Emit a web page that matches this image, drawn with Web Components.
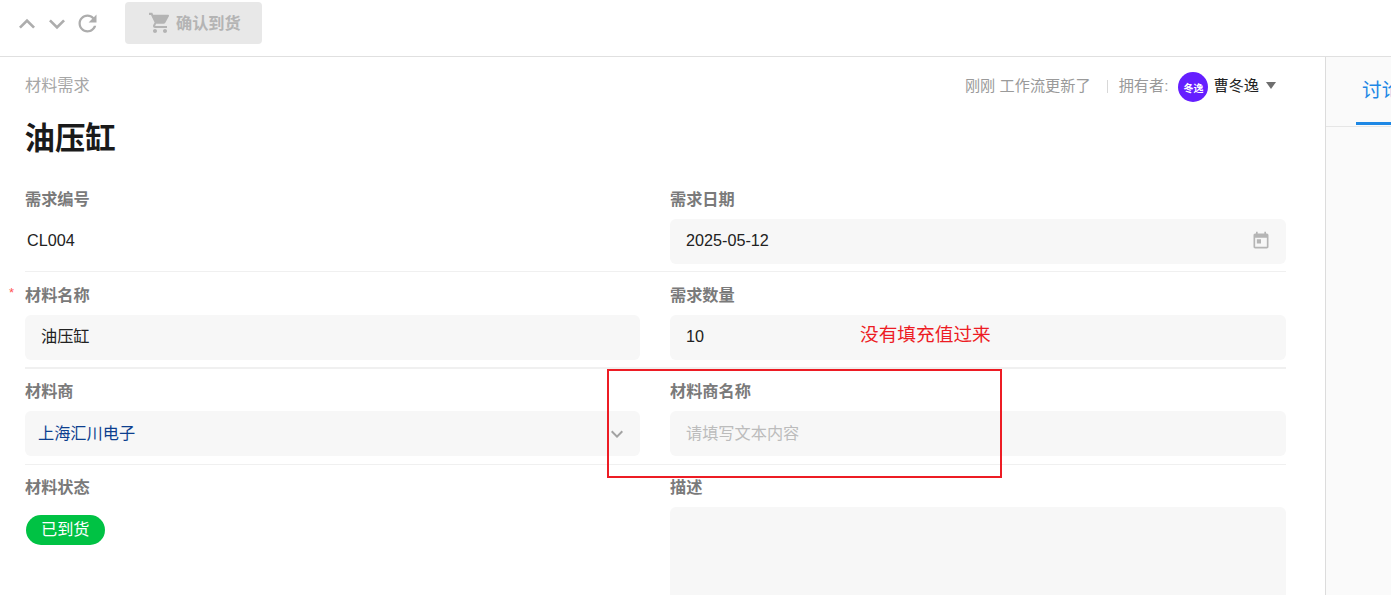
<!DOCTYPE html>
<html lang="zh">
<head>
<meta charset="utf-8">
<title>材料需求</title>
<style>
  html, body { margin: 0; height: 100%; overflow: hidden; background: #fff; }
  body { font: 16.2px "Liberation Sans", "Noto Sans CJK SC", sans-serif; color: #222; }
</style>
</head>
<body>
<record-page>
  <record-toolbar slot="toolbar">确认到货</record-toolbar>
  <record-header slot="header" crumb="材料需求" heading="油压缸"></record-header>

  <form-row>
    <form-field label="需求编号"><span style="padding-left:2px;margin-bottom:2px">CL004</span></form-field>
    <form-field label="需求日期"><field-box icon="today">2025-05-12</field-box></form-field>
  </form-row>
  <form-row thick>
    <form-field label="材料名称" required><field-box cjk="up">油压缸</field-box></form-field>
    <form-field label="需求数量">
      <field-box>10</field-box>
      <red-note>没有填充值过来</red-note>
    </form-field>
  </form-row>
  <form-row after-thick>
    <form-field label="材料商"><field-box icon="more" link cjk>上海汇川电子</field-box></form-field>
    <form-field label="材料商名称"><field-box placeholder cjk>请填写文本内容</field-box></form-field>
  </form-row>
  <form-row last>
    <form-field label="材料状态"><status-pill>已到货</status-pill></form-field>
    <form-field label="描述"><field-box tall></field-box></form-field>
  </form-row>

  <red-box slot="overlay"></red-box>
  <side-panel slot="side"></side-panel>
</record-page>

<script>
const ICONS = {
  less: 'M12 8l-6 6 1.41 1.41L12 10.83l4.59 4.58L18 14z',
  more: 'M16.59 8.59L12 13.17 7.41 8.59 6 10l6 6 6-6z',
  refresh: 'M17.65 6.35C16.2 4.9 14.21 4 12 4c-4.42 0-7.99 3.58-7.99 8s3.57 8 7.99 8c3.73 0 6.84-2.55 7.73-6h-2.08c-.82 2.33-3.04 4-5.65 4-3.31 0-6-2.69-6-6s2.69-6 6-6c1.66 0 3.14.69 4.22 1.78L13 11h7V4l-2.35 2.35z',
  cart: 'M7 18c-1.1 0-1.99.9-1.99 2S5.9 22 7 22s2-.9 2-2-.9-2-2-2zM1 2v2h2l3.6 7.59-1.35 2.45c-.16.28-.25.61-.25.96 0 1.1.9 2 2 2h12v-2H7.42c-.14 0-.25-.11-.25-.25l.03-.12.9-1.83h7.45c.75 0 1.41-.41 1.75-1.03l3.58-6.49c.08-.14.12-.31.12-.48 0-.55-.45-1-1-1H5.21l-.94-2H1zm16 16c-1.1 0-1.99.9-1.99 2s.89 2 1.99 2 2-.9 2-2-.9-2-2-2z',
  today: 'M19 3h-1V1h-2v2H8V1H6v2H5c-1.11 0-1.99.9-1.99 2L3 19c0 1.1.89 2 2 2h14c1.1 0 2-.9 2-2V5c0-1.1-.9-2-2-2zm0 16H5V8h14v11zM7 10h5v5H7z'
};
const icon = (name, size, color) =>
  `<svg class="${name}" width="${size}" height="${size}" viewBox="0 0 24 24" fill="${color}" style="flex:none"><path d="${ICONS[name]}"/></svg>`;

class RecordPage extends HTMLElement {
  connectedCallback() {
    this.attachShadow({ mode: 'open' });
    this.shadowRoot.innerHTML = `
      <style>
        :host { display: flex; flex-direction: column; height: 595px; overflow: hidden; position: relative; }
        .body { flex: 1; display: flex; min-height: 0; }
        main { width: 1325px; flex: none; box-sizing: border-box; padding: 0 39px 0 25px; overflow: hidden; }
      </style>
      <slot name="toolbar"></slot>
      <div class="body">
        <main>
          <slot name="header"></slot>
          <slot></slot>
        </main>
        <slot name="side"></slot>
      </div>
      <slot name="overlay"></slot>
    `;
  }
}

class RecordToolbar extends HTMLElement {
  connectedCallback() {
    this.attachShadow({ mode: 'open' });
    this.shadowRoot.innerHTML = `
      <style>
        :host { display: flex; align-items: center; height: 56px; flex: none; box-sizing: content-box;
                border-bottom: 1px solid #e0e0e0; padding-left: 12px; }
        .tool { width: 30px; height: 46px; margin-top: -9px; display: flex; align-items: center; justify-content: center; }
        button { all: unset; margin-left: 23px; margin-top: -10px; width: 137px; height: 42px; box-sizing: border-box;
                 display: flex; align-items: center; padding-left: 23px; gap: 4px;
                 background: #e8e8e8; border-radius: 4px; color: #b4b4b4; font-weight: 700; font-size: 16.2px; }
        button span { margin-bottom: 2px; }
      </style>
      <span class="tool">${icon('less', 32, '#adadad')}</span>
      <span class="tool">${icon('more', 32, '#adadad')}</span>
      <span class="tool">${icon('refresh', 27, '#adadad')}</span>
      <button>${icon('cart', 24, '#b4b4b4')}<span><slot></slot></span></button>
    `;
  }
}

class RecordHeader extends HTMLElement {
  connectedCallback() {
    this.attachShadow({ mode: 'open' });
    this.shadowRoot.innerHTML = `
      <style>
        :host { display: block; padding-top: 15px; margin-bottom: 18px; }
        .top { display: flex; justify-content: space-between; height: 30px; margin-right: 10px; }
        .crumb { color: #a6a6a6; line-height: 27px; }
        h1 { margin: 16px 0 0 -0.5px; font-size: 30.4px; line-height: 40px; font-weight: 700; color: #1a1a1a; }
        .meta { display: flex; align-items: center; font-size: 15.2px; color: #9a9a9a; }
        .meta span.txt { margin-bottom: 7px; }
        .sep { width: 1px; height: 13px; background: #d8d8d8; margin: -2px 11px 0 16px; }
        .avatar { width: 30px; height: 30px; border-radius: 50%; background: #651fff; color: #fff; font-size: 10px;
                  font-weight: 700; display: flex; align-items: center; justify-content: center; margin: 0 5px 0 10px; }
        .name { color: #222; }
        .caret { width: 0; height: 0; border: 5.5px solid transparent; border-top: 7px solid #6e6e6e; border-bottom: 0;
                 margin: -4px 0 0 7px; }
      </style>
      <div class="top">
        <div class="crumb">${this.getAttribute('crumb')}</div>
        <div class="meta">
          <span class="txt">刚刚 工作流更新了</span><i class="sep"></i><span class="txt">拥有者:</span>
          <span class="avatar">冬逸</span><span class="name txt">曹冬逸</span><i class="caret"></i>
        </div>
      </div>
      <h1>${this.getAttribute('heading')}</h1>
    `;
  }
}

class FormRow extends HTMLElement {
  connectedCallback() {
    this.attachShadow({ mode: 'open' });
    this.shadowRoot.innerHTML = `
      <style>
        :host { display: grid; grid-template-columns: 615px 616px; column-gap: 30px;
                padding: 13px 0 7px; border-bottom: 1px solid #f0f0f0; }
        :host([thick]) { border-bottom-width: 2px; }
        :host([after-thick]) { padding: 12px 0 8px; }
        :host([last]) { border-bottom: 0; padding-top: 12px; }
      </style>
      <slot></slot>
    `;
  }
}

class FormField extends HTMLElement {
  connectedCallback() {
    this.attachShadow({ mode: 'open' });
    const star = this.hasAttribute('required') ? '<b>*</b>' : '';
    this.shadowRoot.innerHTML = `
      <style>
        :host { display: block; position: relative; }
        label { display: block; position: relative; height: 20px; line-height: 20px; margin-bottom: 10px;
                font-weight: 700; color: #7a7a7a; }
        b { position: absolute; left: -16px; top: 0; font-size: 13px; font-weight: 400; color: #f55; line-height: 16px; }
        .value { display: flex; flex-direction: column; min-height: 45px; justify-content: center; }
      </style>
      <label>${star}${this.getAttribute('label')}</label>
      <div class="value"><slot></slot></div>
    `;
  }
}

class FieldBox extends HTMLElement {
  connectedCallback() {
    this.attachShadow({ mode: 'open' });
    const name = this.getAttribute('icon');
    const svg = name === 'more' ? icon('more', 24, '#a3a3a3') : name ? icon(name, 20, '#b5b5b5') : '';
    this.shadowRoot.innerHTML = `
      <style>
        :host { display: flex; align-items: center; justify-content: space-between; height: 45px; box-sizing: border-box;
                padding: 0 16px; background: #f7f7f7; border-radius: 6px; color: #222; }
        :host([link]) { color: #0d3f8f; padding: 0 11px 0 13px; }
        :host([placeholder]) { color: #bcbcbc; }
        :host([tall]) { height: 140px; }
        :host([icon="today"]) { padding-right: 15.5px; }
        span { margin-bottom: 2px; }
        :host([cjk]) span { margin-bottom: 4px; }
        :host([cjk="up"]) span { margin-bottom: 6px; }
        .today { margin-bottom: 2px; }
      </style>
      <span><slot></slot></span>${svg}
    `;
  }
}

class StatusPill extends HTMLElement {
  connectedCallback() {
    this.attachShadow({ mode: 'open' });
    this.shadowRoot.innerHTML = `
      <style>
        :host { display: inline-block; align-self: flex-start; margin: 0 0 0 1px; height: 30px; line-height: 29px; padding: 0 15px;
                border-radius: 15px; background: #00c244; color: #fff; }
      </style>
      <slot></slot>
    `;
  }
}

class RedNote extends HTMLElement {
  connectedCallback() {
    this.attachShadow({ mode: 'open' });
    this.shadowRoot.innerHTML = `
      <style>
        :host { position: absolute; left: 190px; top: 37px; font-size: 18.7px; line-height: 26px; color: #ed1c24; white-space: nowrap; }
      </style>
      <slot></slot>
    `;
  }
}

class RedBox extends HTMLElement {
  connectedCallback() {
    this.attachShadow({ mode: 'open' });
    this.shadowRoot.innerHTML = `
      <style>
        :host { position: absolute; left: 607px; top: 369px; width: 395px; height: 109px; box-sizing: border-box;
                border: 2px solid #ed1c24; }
      </style>
    `;
  }
}

class SidePanel extends HTMLElement {
  connectedCallback() {
    this.attachShadow({ mode: 'open' });
    this.shadowRoot.innerHTML = `
      <style>
        :host { display: block; flex: 1; min-width: 0; overflow: hidden; background: #fafafa; border-left: 1px solid #dcdcdc; }
        .tabs { height: 70px; box-sizing: border-box; padding-left: 30px; border-bottom: 1px solid #e6e6e6; }
        .tab { display: block; width: 80px; height: 68px; box-sizing: border-box; padding: 19px 0 0 6px; font-size: 19.7px; line-height: 28px;
               color: #1e88e5; border-bottom: 3px solid #1e88e5; white-space: nowrap; }
      </style>
      <div class="tabs"><span class="tab">讨论</span></div>
    `;
  }
}

customElements.define('record-page', RecordPage);
customElements.define('record-toolbar', RecordToolbar);
customElements.define('record-header', RecordHeader);
customElements.define('form-row', FormRow);
customElements.define('form-field', FormField);
customElements.define('field-box', FieldBox);
customElements.define('status-pill', StatusPill);
customElements.define('red-note', RedNote);
customElements.define('red-box', RedBox);
customElements.define('side-panel', SidePanel);
</script>
</body>
</html>
